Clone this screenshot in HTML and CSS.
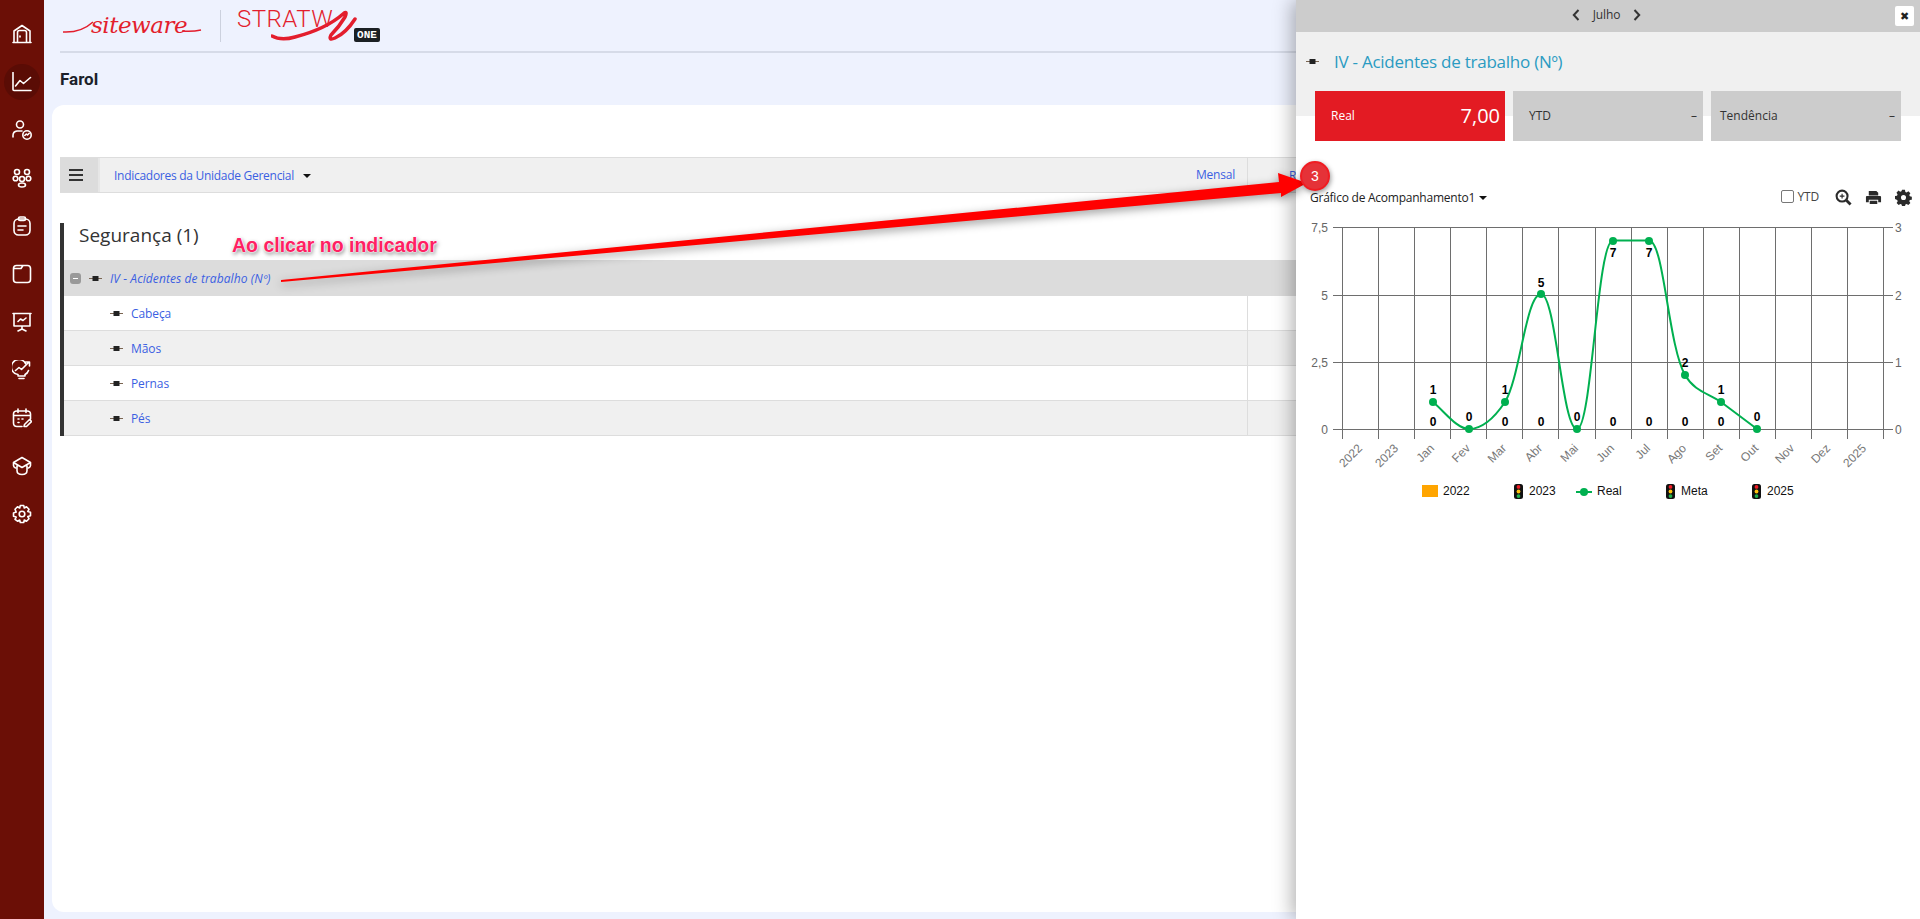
FILE: index.html
```html
<!DOCTYPE html>
<html lang="pt-BR">
<head>
    <meta charset="UTF-8">
    <title>Farol</title>
    <link rel="stylesheet" href="styles.css">
</head>
<body>
    <svg class="defs">
        <symbol id="conn" viewBox="0 0 13 7">
            <path d="M0 3.500h13" stroke="#7a6552" stroke-width="1"/>
            <rect x="3.500" y="1" width="6" height="5" fill="#222"/>
        </symbol>
        <symbol id="light" viewBox="0 0 9 15">
            <rect width="9" height="15" rx="2.500" fill="#111"/>
            <circle cx="4.500" cy="2.900" r="1.900" fill="#ee1c25"/>
            <circle cx="4.500" cy="7.500" r="1.900" fill="#ffc20e"/>
            <circle cx="4.500" cy="12.100" r="1.900" fill="#22b14c"/>
        </symbol>
    </svg>

    <nav class="sidebar">
        <a class="nav_item">
            <svg viewBox="0 0 20 20"><path d="M1 18.500h18M2 18.500V7L10 1.500 18 7v11.500M5.500 18.500V8.500q0-2 2-2h5q2 0 2 2v10M8 12v1"/></svg>
        </a>
        <a class="nav_item active">
            <svg viewBox="0 0 20 20"><path d="M1 0.500v17q0 1 1 1h17M3.500 14l4.500-5.500 3.500 3L18.500 5.500"/></svg>
        </a>
        <a class="nav_item">
            <svg viewBox="0 0 20 20"><circle cx="8" cy="4.500" r="3.500"/><path d="M1 17v-1.500q0-4 4-4.500h5"/><circle cx="15" cy="15" r="4.200"/><path d="M12.800 15.500l1.500-1.500 1.200 1 1.700-1.700"/></svg>
        </a>
        <a class="nav_item">
            <svg viewBox="0 0 20 20"><circle cx="5" cy="4" r="2.500"/><circle cx="15" cy="4" r="2.500"/><circle cx="3.500" cy="10.500" r="2.300"/><circle cx="16.500" cy="10.500" r="2.300"/><circle cx="10" cy="11" r="2.500"/><ellipse cx="10" cy="17" rx="3.500" ry="2"/></svg>
        </a>
        <a class="nav_item">
            <svg viewBox="0 0 20 20"><rect x="2" y="3" width="16" height="16" rx="4.500"/><rect x="6.500" y="1" width="7" height="3.500" rx="1.500"/><path d="M6 10h8M6 14h5"/></svg>
        </a>
        <a class="nav_item">
            <svg viewBox="0 0 20 20"><path d="M4.500 1.500h11q3 0 3 3v11q0 3-3 3h-11q-3 0-3-3V4.500q0-3 3-3zM1.500 4.500h7.500l2-3"/></svg>
        </a>
        <a class="nav_item">
            <svg viewBox="0 0 20 20"><path d="M1 1.500h18M2 1.500v12.500h16V1.500M10 14v3M6 19l4-2 4 2M6 9.500l2.500-2.500 2.500 1.500L14 6"/></svg>
        </a>
        <a class="nav_item">
            <svg viewBox="0 0 20 20"><path d="M13.500 3.500A7.500 7.500 0 1 0 6 14.500v1.500h7v-1.500q2.500-1 3.500-4M7 18.500h5M3.500 10.500l3.500-3 2.500 2 7.500-7.500M13.500 2h4v4"/></svg>
        </a>
        <a class="nav_item">
            <svg viewBox="0 0 20 20"><path d="M10 18.500H5q-3.500 0-3.500-3.500V6q0-3 3.500-3h10q3.500 0 3.500 3v5M1.500 7.500h17M6 1v3.500M14 1v3.500M6 11h1M6 14.500h1M10 11h1M12 18.500l.5-2 5-5 2 2-5 5z"/></svg>
        </a>
        <a class="nav_item">
            <svg viewBox="0 0 20 20"><path d="M10 1.500l8.500 5-8.500 5-8.500-5zM1.500 6.500v3q0 1.500 2 2.500M5 9.500v5q0 4 5 4t5-4v-5M18.500 6.500v3q0 1.500-2 2.500"/></svg>
        </a>
        <a class="nav_item">
            <svg viewBox="0 0 20 20"><circle cx="10" cy="10" r="2.800"/><path d="M8.300 1.500h3.400l.6 2.500 2.200-1.200 2.500 2.500-1.200 2.200 2.700.8v3.400l-2.700.8 1.200 2.200-2.500 2.500-2.200-1.200-.6 2.500H8.300l-.6-2.500-2.200 1.200L3 15.300l1.200-2.200-2.700-.8V8.900l2.700-.8L3 5.300l2.500-2.500 2.200 1.200z"/></svg>
        </a>
    </nav>

    <div class="main">
        <header class="topbar">
            <div class="logo">
                <span class="logo_site">siteware</span>
                <svg class="logo_swash" viewBox="0 0 140 12"><path d="M1 11q18 1 30-10M120 10q10 1 19-1"/></svg>
            </div>
            <div class="logo_sep"></div>
            <div class="logo2">
                <span class="logo_strat">STRATW</span>
                <svg class="logo2_s" viewBox="0 0 90 34"><path d="M1 27q9 5 23 1 31-8 48-23 5-4 2 3-6 10-14 18-3 6 4 3 11-5 20-19"/></svg>
                <span class="logo_one">ONE</span>
            </div>
        </header>
        <h1 class="page_title">Farol</h1>

        <section class="card">
            <div class="toolbar">
                <div class="toolbar_menu"><i></i><i></i><i></i></div>
                <div class="toolbar_name">
                    <a>Indicadores da Unidade Gerencial</a>
                    <span class="caret caret_name"></span>
                </div>
                <div class="toolbar_period"><a>Mensal</a></div>
                <div class="toolbar_rest"><a>R</a></div>
            </div>

            <div class="group">
                <h2 class="group_title">Segurança (1)</h2>
                <div class="row row_parent">
                    <div class="row_name">
                        <span class="collapse"></span>
                        <svg class="conn"><use href="#conn"/></svg>
                        <a>IV - Acidentes de trabalho (Nº)</a>
                    </div>
                </div>
                <div class="row">
                    <div class="row_name child"><svg class="conn"><use href="#conn"/></svg><a>Cabeça</a></div>
                    <div class="row_cell"></div>
                </div>
                <div class="row odd">
                    <div class="row_name child"><svg class="conn"><use href="#conn"/></svg><a>Mãos</a></div>
                    <div class="row_cell"></div>
                </div>
                <div class="row">
                    <div class="row_name child"><svg class="conn"><use href="#conn"/></svg><a>Pernas</a></div>
                    <div class="row_cell"></div>
                </div>
                <div class="row odd">
                    <div class="row_name child"><svg class="conn"><use href="#conn"/></svg><a>Pés</a></div>
                    <div class="row_cell"></div>
                </div>
            </div>
        </section>
    </div>

    <aside class="panel">
        <div class="panel_top">
            <svg class="chev" viewBox="0 0 8 12"><path d="M6.500 1L1.800 6l4.700 5"/></svg>
            <span class="panel_month">Julho</span>
            <svg class="chev" viewBox="0 0 8 12"><path d="M1.500 1l4.700 5-4.700 5"/></svg>
            <button class="panel_close">✖</button>
        </div>
        <div class="panel_head">
            <div class="panel_title">
                <svg class="conn"><use href="#conn"/></svg>
                <span>IV - Acidentes de trabalho (Nº)</span>
            </div>
            <div class="kpis">
                <div class="kpi kpi_red"><span>Real</span><b>7,00</b></div>
                <div class="kpi"><span>YTD</span><b>–</b></div>
                <div class="kpi kpi_tend"><span>Tendência</span><b>–</b></div>
            </div>
        </div>

        <div class="chart_bar">
            <div class="chart_name">Gráfico de Acompanhamento1<span class="caret"></span></div>
            <label class="chart_ytd"><span class="checkbox"></span>YTD</label>
            <svg class="tool" viewBox="0 0 18 18"><circle cx="7.500" cy="7.500" r="5.800" class="tool_ring"/><path d="M12 12l4.500 4.500" class="tool_line"/><path d="M7.500 5v5M5 7.500h5" class="tool_thin"/></svg>
            <svg class="tool" viewBox="0 0 18 18"><path d="M4 7V2h8l2 2v3zM1 8.500q0-1 1-1h14q1 0 1 1V14h-3v-2.500H4V14H1zM5 12.500h8V16H5z"/></svg>
            <svg class="tool" viewBox="0 0 20 20"><path fill-rule="evenodd" d="M8.300 1h3.400l.5 2.400 1.500.6 2-1.300 2.400 2.400-1.300 2 .6 1.500 2.400.5v3.400l-2.400.5-.6 1.500 1.300 2-2.400 2.400-2-1.300-1.500.6-.5 2.400H8.300l-.5-2.400-1.500-.6-2 1.300-2.400-2.400 1.300-2-.6-1.500L0 11.700V8.300l2.400-.5.6-1.500-1.300-2 2.400-2.400 2 1.300 1.500-.6zM10 7a3 3 0 1 0 0 6 3 3 0 0 0 0-6z"/></svg>
        </div>

        <svg class="chart" viewBox="1296 210 624 300" width="624" height="300">
            <g class="grid">
                <path d="M1333 227H1893M1333 295H1893M1333 362H1893M1333 429H1893"/>
                <path d="M1342 227V439M1378 227V439M1414 227V439M1450 227V439M1486 227V439M1522 227V439M1558 227V439M1595 227V439M1631 227V439M1667 227V439M1703 227V439M1739 227V439M1775 227V439M1811 227V439M1847 227V439M1883 227V439"/>
            </g>
            <g class="axis_y">
                <text x="1328" y="232">7,5</text>
                <text x="1328" y="300">5</text>
                <text x="1328" y="367">2,5</text>
                <text x="1328" y="434">0</text>
            </g>
            <g class="axis_y2">
                <text x="1895" y="232">3</text>
                <text x="1895" y="300">2</text>
                <text x="1895" y="367">1</text>
                <text x="1895" y="434">0</text>
            </g>
            <g class="axis_x">
                <text transform="translate(1363 449) rotate(-45)">2022</text>
                <text transform="translate(1399 449) rotate(-45)">2023</text>
                <text transform="translate(1435 449) rotate(-45)">Jan</text>
                <text transform="translate(1471 449) rotate(-45)">Fev</text>
                <text transform="translate(1507 449) rotate(-45)">Mar</text>
                <text transform="translate(1543 449) rotate(-45)">Abr</text>
                <text transform="translate(1579 449) rotate(-45)">Mai</text>
                <text transform="translate(1615 449) rotate(-45)">Jun</text>
                <text transform="translate(1651 449) rotate(-45)">Jul</text>
                <text transform="translate(1687 449) rotate(-45)">Ago</text>
                <text transform="translate(1723 449) rotate(-45)">Set</text>
                <text transform="translate(1759 449) rotate(-45)">Out</text>
                <text transform="translate(1795 449) rotate(-45)">Nov</text>
                <text transform="translate(1831 449) rotate(-45)">Dez</text>
                <text transform="translate(1867 449) rotate(-45)">2025</text>
            </g>
            <path class="line" d="M1433 402C1445 412 1457 429 1469 429C1482 429 1493 420 1505 402C1520 378 1526 294 1541 294C1556 294 1562 429 1577 429C1592 429 1597 240.500 1613 240.500H1649C1664 240.500 1668 345 1685 375C1695 392 1708 393 1721 402L1757 429"/>
            <g class="dots">
                <circle cx="1433" cy="402" r="4"/><circle cx="1469" cy="429" r="4"/><circle cx="1505" cy="402" r="4"/><circle cx="1541" cy="294" r="4"/><circle cx="1577" cy="429" r="4"/><circle cx="1613" cy="241" r="4"/><circle cx="1649" cy="241" r="4"/><circle cx="1685" cy="375" r="4"/><circle cx="1721" cy="402" r="4"/><circle cx="1757" cy="429" r="4"/>
            </g>
            <g class="labels">
                <text x="1433" y="394">1</text><text x="1505" y="394">1</text><text x="1541" y="287">5</text>
                <text x="1613" y="257">7</text><text x="1649" y="257">7</text><text x="1685" y="367">2</text><text x="1721" y="394">1</text>
                <text x="1433" y="426">0</text><text x="1505" y="426">0</text><text x="1541" y="426">0</text><text x="1613" y="426">0</text><text x="1649" y="426">0</text><text x="1685" y="426">0</text><text x="1721" y="426">0</text>
                <text x="1469" y="421">0</text><text x="1577" y="421">0</text><text x="1757" y="421">0</text>
            </g>
            <g class="legend">
                <rect x="1422" y="485" width="16" height="12" fill="#ffa500"/>
                <text x="1443" y="495">2022</text>
                <use href="#light" x="1514" y="484" width="9" height="15"/>
                <text x="1529" y="495">2023</text>
                <path d="M1576 492h16" stroke="#00b050" stroke-width="2"/>
                <circle cx="1584" cy="492" r="4" fill="#00b050"/>
                <text x="1597" y="495">Real</text>
                <use href="#light" x="1666" y="484" width="9" height="15"/>
                <text x="1681" y="495">Meta</text>
                <use href="#light" x="1752" y="484" width="9" height="15"/>
                <text x="1767" y="495">2025</text>
            </g>
        </svg>
    </aside>

    <!-- anotacao por cima da tela -->
    <span class="note_text">Ao clicar no indicador</span>
    <svg class="note_arrow" viewBox="0 0 1920 919" width="1920" height="919">
        <polygon points="281,280 1279,182 1278,173 1307,183 1281,197 1281,193 281,282"/>
    </svg>
    <span class="note_badge">3</span>
</body>
</html>
```

FILE: styles.css
```css
*{
    margin: 0;
    padding: 0;
    box-sizing: border-box;
}

html,body{
    height: 100%;
}

body{
    display: flex;
    overflow: hidden;
    background-color: #eef2fe;
    font-family: "Open Sans", "Noto Sans", sans-serif;
    font-size: 12px;
    color: #222;
}

a{
    color: #3b5fe2;
}

.defs{
    position: absolute;
    width: 0;
    height: 0;
}

/* menu lateral */
.sidebar{
    width: 44px;
    flex-shrink: 0;
    padding-top: 16px;
    background-color: #6b0f06;
    display: flex;
    flex-direction: column;
    align-items: center;
}

.nav_item{
    width: 36px;
    height: 36px;
    margin-bottom: 12px;
    border-radius: 50%;
    display: flex;
    align-items: center;
    justify-content: center;
}

.nav_item.active{
    background-color: #5a0c05;
}

.nav_item svg{
    width: 20px;
    height: 20px;
    fill: none;
    stroke: #fff;
    stroke-width: 1.6;
    stroke-linecap: round;
    stroke-linejoin: round;
}

/* area principal */
.main{
    flex: 1;
    min-width: 0;
    padding: 0 0 7px 8px;
    display: flex;
    flex-direction: column;
}

.topbar{
    height: 53px;
    margin-left: 8px;
    border-bottom: 2px solid #d6dbe8;
    display: flex;
    align-items: flex-start;
}

.logo{
    width: 160px;
    height: 50px;
    position: relative;
}

.logo_site{
    position: absolute;
    left: 31px;
    top: 11px;
    font-family: "DejaVu Serif", serif;
    font-style: italic;
    font-size: 23px;
    letter-spacing: -0.5px;
    line-height: 28px;
    color: #e31e2d;
}

.logo_swash{
    position: absolute;
    left: 2px;
    top: 21px;
    width: 140px;
    height: 12px;
    fill: none;
    stroke: #e31e2d;
    stroke-width: 1.5;
}

.logo_sep{
    width: 1px;
    height: 32px;
    margin-top: 10px;
    background-color: #ccd1de;
}

.logo2{
    width: 150px;
    height: 50px;
    margin-left: 16px;
    position: relative;
}

.logo_strat{
    position: absolute;
    left: 0;
    top: 5px;
    font-family: "Roboto", sans-serif;
    font-weight: 300;
    font-size: 24px;
    line-height: 28px;
    letter-spacing: 0.5px;
    color: #e31e2d;
}

.logo2_s{
    position: absolute;
    left: 34px;
    top: 9px;
    width: 90px;
    height: 34px;
    fill: none;
    stroke: #e31e2d;
    stroke-width: 3.5;
    stroke-linecap: round;
    stroke-linejoin: round;
}

.logo_one{
    position: absolute;
    left: 117px;
    top: 28px;
    width: 26px;
    height: 14px;
    background-color: #1b2024;
    border-radius: 2px;
    color: #fff;
    font-family: "Liberation Mono", monospace;
    font-weight: bold;
    font-size: 11px;
    line-height: 14px;
    text-align: center;
}

.page_title{
    margin-left: 8px;
    height: 52px;
    padding-top: 16px;
    font-family: "Roboto", sans-serif;
    font-size: 17px;
    font-weight: bold;
    line-height: 20px;
    color: #1b1f2a;
}

.card{
    flex: 1;
    background-color: #fff;
    border-radius: 12px 0 0 12px;
    padding: 52px 0 0 8px;
}

.toolbar{
    height: 36px;
    background-color: #f0f0f0;
    border-top: 1px solid #ddd;
    border-bottom: 1px solid #ddd;
    display: flex;
    align-items: center;
}

.toolbar_menu{
    width: 40px;
    height: 100%;
    flex-shrink: 0;
    background-color: #dcdcdc;
    border-right: 2px solid #e6e6e6;
    display: flex;
    flex-direction: column;
    justify-content: center;
    gap: 3px;
    padding-left: 9px;
}

.toolbar_menu i{
    display: block;
    width: 14px;
    height: 2px;
    background-color: #333;
}

.toolbar_name{
    width: 1061px;
    flex-shrink: 0;
    padding-left: 14px;
    padding-top: 1px;
    letter-spacing: -0.28px;
}

.caret{
    display: inline-block;
    margin-left: 4px;
    border-left: 4px solid transparent;
    border-right: 4px solid transparent;
    border-top: 4px solid #111;
    vertical-align: 2px;
}

.caret_name{
    margin-left: 6px;
}

.toolbar_period{
    width: 87px;
    height: 100%;
    flex-shrink: 0;
    border-right: 1px solid #ddd;
    text-align: right;
    padding: 8px 12px 0 0;
    letter-spacing: -0.2px;
}

.toolbar_rest{
    padding-left: 41px;
}

.group{
    margin-top: 30px;
    border-left: 4px solid #333;
}

.group_title{
    height: 37px;
    padding-left: 15px;
    font-size: 19px;
    font-weight: normal;
    line-height: 25px;
    color: #333;
}

.row{
    height: 35px;
    background-color: #fff;
    border-bottom: 1px solid #ddd;
    display: flex;
}

.row.odd{
    background-color: #f0f0f0;
}

.row_parent{
    height: 36px;
    background-color: #dcdcdc;
    border-bottom: 0;
}

.row_name{
    width: 1184px;
    display: flex;
    align-items: center;
    letter-spacing: -0.1px;
}

.row_parent .row_name{
    padding-left: 6px;
    font-style: italic;
    letter-spacing: 0.1px;
}

.row_name.child{
    padding-left: 46px;
    border-right: 1px solid #ddd;
}

.row_cell{
    flex: 1;
}

.collapse{
    width: 11px;
    height: 11px;
    margin-right: 8px;
    background-color: #999;
    border-radius: 3px;
    position: relative;
}

.collapse::after{
    content: "";
    position: absolute;
    left: 3px;
    top: 5px;
    width: 5px;
    height: 1px;
    background-color: #fff;
}

.conn{
    width: 13px;
    height: 7px;
    margin-right: 8px;
    flex-shrink: 0;
}

/* painel do indicador */
.panel{
    position: absolute;
    top: 0;
    right: 0;
    bottom: 0;
    width: 624px;
    background-color: #fff;
    box-shadow: -4px 0 18px rgba(0, 0, 0, 0.3);
}

.panel_top{
    height: 32px;
    padding-bottom: 3px;
    padding-right: 3px;
    background-color: #ccc;
    display: flex;
    align-items: center;
    justify-content: center;
    gap: 13px;
    position: relative;
}

.panel_month{
    color: #333;
    letter-spacing: -0.1px;
}

.chev{
    width: 8px;
    height: 12px;
    fill: none;
    stroke: #333;
    stroke-width: 2;
}

.panel_close{
    position: absolute;
    right: 6px;
    top: 6px;
    width: 19px;
    height: 20px;
    border: 0;
    border-radius: 2px;
    background-color: #fff;
    color: #222;
    font-size: 11px;
    line-height: 20px;
}

.panel_head{
    height: 84px;
    padding: 0 19px;
    background-color: #f0f0f0;
}

.panel_title{
    height: 59px;
    display: flex;
    align-items: center;
    font-size: 17px;
    letter-spacing: -0.25px;
    color: #2a9bc2;
}

.panel_title .conn{
    margin-right: 15px;
    margin-left: -9px;
}

.kpis{
    display: grid;
    grid-template-columns: repeat(3, 190px);
    gap: 8px;
}

.kpi{
    height: 50px;
    padding: 0 6px 2px 16px;
    background-color: #ccc;
    display: flex;
    align-items: center;
    justify-content: space-between;
    color: #333;
}

.kpi b{
    font-weight: normal;
}

.kpi_tend{
    padding-left: 9px;
}

.kpi_red{
    background-color: #e31b23;
    color: #fff;
    padding-right: 5px;
}

.kpi_red b{
    font-size: 20px;
}

.chart_bar{
    height: 34px;
    margin-top: 64px;
    padding: 0 8px 0 14px;
    display: flex;
    align-items: center;
}

.chart_name{
    flex: 1;
    letter-spacing: -0.24px;
    color: #222;
}

.chart_ytd{
    margin-right: 3px;
    padding-bottom: 2px;
    display: flex;
    align-items: center;
    gap: 4px;
    letter-spacing: -0.2px;
    color: #444;
}

.checkbox{
    width: 13px;
    height: 13px;
    background-color: #fff;
    border: 1px solid #777;
    border-radius: 2px;
}

.tool{
    width: 17px;
    height: 17px;
    margin-left: 13px;
    fill: #2b2b2b;
}

.tool_ring{
    fill: none;
    stroke: #2b2b2b;
    stroke-width: 2.2;
}

.tool_line{
    fill: none;
    stroke: #2b2b2b;
    stroke-width: 3;
}

.tool_thin{
    fill: none;
    stroke: #2b2b2b;
    stroke-width: 1.2;
}

/* grafico */
.chart{
    display: block;
    position: absolute;
    left: 0;
    top: 210px;
    font-family: "Liberation Sans", sans-serif;
    font-size: 12px;
}

.grid path{
    fill: none;
    stroke: #6e6e6e;
    stroke-width: 1;
    shape-rendering: crispEdges;
}

.axis_y text{
    text-anchor: end;
    fill: #666;
}

.axis_y2 text{
    fill: #666;
}

.axis_x text{
    text-anchor: end;
    fill: #777;
}

.line{
    fill: none;
    stroke: #00b050;
    stroke-width: 2;
}

.dots circle{
    fill: #00b050;
}

.labels text{
    text-anchor: middle;
    font-weight: bold;
    fill: #000;
}

.legend text{
    fill: #111;
}

/* anotacao */
.note_text{
    position: absolute;
    left: 232px;
    top: 234px;
    font-family: "Liberation Sans", sans-serif;
    font-size: 19.5px;
    font-weight: bold;
    line-height: 22px;
    color: #ff2062;
    text-shadow: 0 0 1px #fff, 0 0 2px #fff, 0 0 2px #fff, 1px 2px 4px rgba(0, 0, 0, 0.6);
}

.note_arrow{
    position: absolute;
    left: 0;
    top: 0;
    fill: #f00;
    filter: drop-shadow(0 3px 5px rgba(0, 0, 0, 0.4));
}

.note_badge{
    position: absolute;
    left: 1300px;
    top: 161px;
    width: 30px;
    height: 30px;
    border-radius: 50%;
    background-color: #e53238;
    border: 2px solid #f01c22;
    box-shadow: 1px 2px 5px rgba(0, 0, 0, 0.4);
    color: #fff;
    font-family: "Liberation Sans", sans-serif;
    font-size: 14px;
    line-height: 26px;
    text-align: center;
}
```
